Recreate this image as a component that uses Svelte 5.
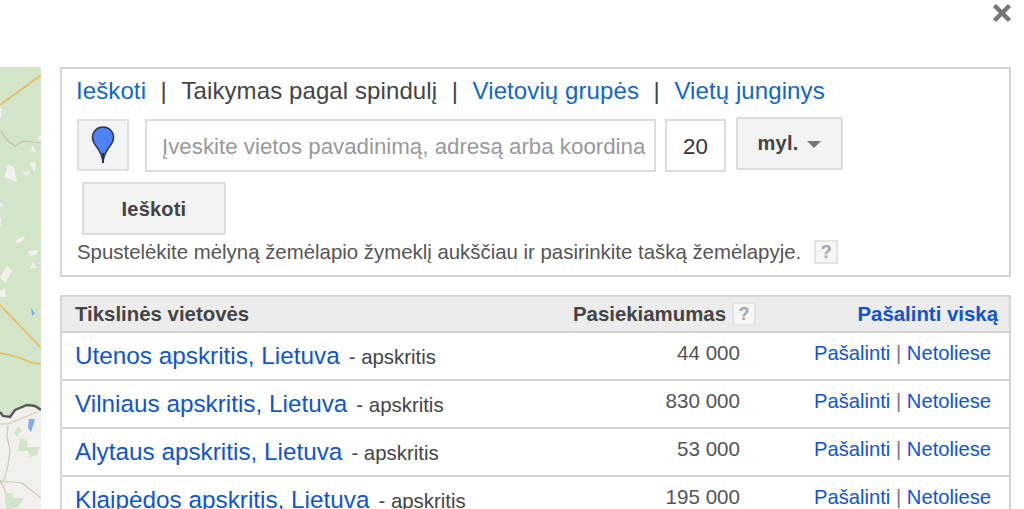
<script>
	const rows = [
		{ name: 'Utenos apskritis, Lietuva', reach: '44 000' },
		{ name: 'Vilniaus apskritis, Lietuva', reach: '830 000' },
		{ name: 'Alytaus apskritis, Lietuva', reach: '53 000' },
		{ name: 'Klaipėdos apskritis, Lietuva', reach: '195 000' }
	];
</script>

<div class="page">
	<div class="topbar">
		<svg class="close" width="20" height="20" viewBox="0 0 20 20">
			<path d="M2.5 2.500 L17.500 17.500 M17.500 2.500 L2.500 17.500" stroke="#777" stroke-width="4.500" fill="none" />
		</svg>
	</div>

	<div class="content">
		<div class="map">
			<svg width="41" height="442" viewBox="0 0 41 442">
				<rect width="41" height="442" fill="#f2f0ed" />
				<path d="M0 0 H41 V343 C38 339 32 338 27 338 C20 339 17 341 15 343 L10 350 L3 349 L0 345 Z" fill="#d3e5c9" />
				<!-- roads -->
				<path d="M0 38 L41 8" stroke="#e9bb5a" stroke-width="1.600" fill="none" />
				<path d="M0 63 L7 73 L15 79 L23 74 L41 76" stroke="#c9bfae" stroke-width="1.200" fill="none" />
				<path d="M0 238 L41 281" stroke="#e9bb5a" stroke-width="1.600" fill="none" />
				<path d="M0 286 L17 290 L33 296 L41 297" stroke="#e9bb5a" stroke-width="1.600" fill="none" />
				<path d="M0 357 L7 357 L23 351 L37 345" stroke="#cfc8b8" stroke-width="1.200" fill="none" />
				<path d="M8 358 L7 370 L10 383 L8 398 L5 411 L0 416" stroke="#cfc8b8" stroke-width="1.200" fill="none" />
				<path d="M0 414 L22 416 L41 431 M0 413 L5 423 L7 441" stroke="#cfc8b8" stroke-width="1.200" fill="none" />
				<!-- border -->
				<path d="M0 345 L3 349 L10 350 L15 343 L27 338 L35 339 L41 343" stroke="#555" stroke-width="2.400" fill="none" />
				<!-- clearings -->
				<g fill="#f2f0ed">
					<path d="M8 98 L14 100 L17 115 L4 110 Z" />
					<path d="M22 106 L31 103 L28 109 Z" />
					<path d="M29 96 L36 95 L35 105 Z" />
					<path d="M33 78 L36 85 L31 84 Z" />
					<path d="M41 67 V73 H37 Z" />
					<path d="M0 41 H1.500 V51 H0 Z" />
					<path d="M0 135 L4 139 L0 140 Z" />
					<path d="M0 151 H1 V158 H0 Z" />
					<path d="M15 173 L25 169 L23 174 L17 176 Z" />
					<path d="M28 184 L38 183 L36 188 L30 189 Z" />
					<path d="M33 195 L37 201 L30 201 Z" />
					<path d="M7 199 L12 204 L5 216 L0 210 Z" />
					<path d="M5 221 L6 230 H0 V224 Z" />
				</g>
				<!-- water -->
				<g fill="#7fabf5">
					<path d="M31 241 L35 246 L32 249 Z" />
					<path d="M29 352 H35 L31 365 L28 361 Z" />
				</g>
				<!-- forest -->
				<g fill="#d3e5c9">
					<path d="M18 359 L22 363 L17 370 L14 366 Z" />
					<path d="M20 371 L27 373 L28 380 L40 380 L37 385 L38 388 L30 390 L28 384 L18 384 Z" />
					<path d="M5 426 H13 V431 H24 L18 440 L10 442 H7 L5 433 Z" />
				</g>
			</svg>
		</div>

		<div class="main">
			<section class="panel">
				<nav class="tabs">
					<a href="#a">Ieškoti</a>
					<span class="sep">|</span>
					<span class="current">Taikymas pagal spindulį</span>
					<span class="sep">|</span>
					<a href="#a">Vietovių grupės</a>
					<span class="sep">|</span>
					<a href="#a">Vietų junginys</a>
				</nav>

				<div class="search">
					<button class="pin" aria-label="Žymeklis">
						<svg width="24" height="38" viewBox="0 0 24 38">
							<path d="M12 37 C11.500 29 9 25 5 20 C2.500 17 1.500 14.500 1.500 11.500 C1.500 5.500 6 1 12 1 C18 1 22.500 5.500 22.500 11.500 C22.500 14.500 21.500 17 19 20 C15 25 12.500 29 12 37 Z" fill="#4f82f5" stroke="#2b3a55" stroke-width="1.500" />
							<path d="M12 27 V37" stroke="#26324a" stroke-width="2" />
						</svg>
					</button>
					<div class="field place">Įveskite vietos pavadinimą, adresą arba koordina</div>
					<div class="field radius">20</div>
					<button class="btn unit">myl. <span class="caret"></span></button>
				</div>

				<button class="btn submit">Ieškoti</button>

				<p class="hint">
					Spustelėkite mėlyną žemėlapio žymeklį aukščiau ir pasirinkite tašką žemėlapyje.
					<span class="help">?</span>
				</p>
			</section>

			<section class="table">
				<div class="row head">
					<span>Tikslinės vietovės</span>
					<span class="reach-head">Pasiekiamumas <span class="help">?</span></span>
					<a href="#a" class="remove-all">Pašalinti viską</a>
				</div>
				{#each rows as row}
					<div class="row">
						<span class="place-name"><a href="#a">{row.name}</a><span class="kind">- apskritis</span></span>
						<span class="reach">{row.reach}</span>
						<span class="actions"><a href="#a">Pašalinti</a> <span class="bar">|</span> <a href="#a">Netoliese</a></span>
					</div>
				{/each}
			</section>
		</div>
	</div>
</div>

<style>
	:global(body) {
		margin: 0;
		background: #fff;
	}

	.page {
		width: 1024px;
		height: 509px;
		overflow: hidden;
		font-family: 'Liberation Sans', Arial, sans-serif;
		color: #444;
	}

	a {
		text-decoration: none;
	}

	.topbar {
		height: 67px;
		display: flex;
		justify-content: flex-end;
		padding: 3px 12px 0 0;
		box-sizing: border-box;
	}

	.content {
		display: flex;
		gap: 19px;
	}

	.map {
		width: 41px;
		height: 442px;
		flex-shrink: 0;
	}

	.map svg {
		display: block;
	}

	.main {
		width: 951px;
		flex-shrink: 0;
		display: flex;
		flex-direction: column;
		gap: 18px;
	}

	.panel {
		height: 210px;
		box-sizing: border-box;
		border: 2px solid #d4d4d4;
		padding: 7px 15px 0;
	}

	.tabs {
		display: flex;
		gap: 14.500px;
		margin-left: -1px;
		font-size: 24px;
		letter-spacing: 0.1px;
		line-height: 30px;
		height: 30px;
		white-space: nowrap;
	}

	.tabs a {
		color: #1167c9;
	}

	.sep,
	.current {
		color: #444;
	}

	.search {
		display: flex;
		align-items: flex-start;
		margin-top: 11px;
	}

	.pin {
		width: 52px;
		height: 52px;
		padding: 0;
		margin-top: 2px;
		box-sizing: border-box;
		border: 2px solid #e0e0e0;
		background: #f4f4f4;
		display: flex;
		align-items: center;
		justify-content: center;
		margin-right: 16px;
	}

	.field {
		box-sizing: border-box;
		height: 53px;
		margin-top: 2px;
		border: 2px solid #dcdcdc;
		font-size: 22.300px;
		line-height: 52px;
		white-space: nowrap;
		overflow: hidden;
	}

	.place {
		width: 511px;
		padding-left: 15px;
		color: #999;
		margin-right: 9px;
	}

	.radius {
		width: 61px;
		text-align: center;
		color: #333;
		margin-right: 10px;
	}

	.btn {
		box-sizing: border-box;
		border: 2px solid #dcdcdc;
		border-radius: 2px;
		background: #f3f3f3;
		color: #444;
		font: bold 20px 'Liberation Sans', Arial, sans-serif;
		letter-spacing: 0.2px;
		padding: 0;
	}

	.unit {
		width: 107px;
		height: 53px;
		display: flex;
		align-items: center;
		justify-content: center;
		gap: 9px;
	}

	.caret {
		width: 0;
		height: 0;
		border-left: 7px solid transparent;
		border-right: 7px solid transparent;
		border-top: 7px solid #777;
		margin-top: 1px;
	}

	.submit {
		display: block;
		width: 144px;
		height: 53px;
		margin: 10px 0 0 5px;
		padding-top: 2px;
	}

	.hint {
		margin: 4px 0 0;
		font-size: 20.400px;
		line-height: 26px;
		color: #555;
		white-space: nowrap;
		display: flex;
		align-items: center;
		gap: 13px;
	}

	.help {
		display: inline-block;
		box-sizing: border-box;
		width: 24px;
		height: 24px;
		border: 2px solid #e4e4e4;
		background: #f6f6f6;
		color: #a5a5a5;
		font-size: 18px;
		font-weight: bold;
		line-height: 20px;
		text-align: center;
	}

	.table {
		border: 2px solid #d4d4d4;
		border-bottom: 0;
	}

	.row {
		display: grid;
		grid-template-columns: 520px 145px 1fr;
		align-items: center;
		height: 48px;
		box-sizing: border-box;
		padding: 0 13px;
		border-bottom: 2px solid #d4d4d4;
		white-space: nowrap;
	}

	.head {
		height: 36px;
		background: #ececec;
		font-weight: bold;
		font-size: 20.400px;
		color: #444;
		padding-right: 11px;
	}

	.reach-head {
		display: flex;
		align-items: center;
		justify-content: flex-end;
		gap: 6px;
		margin-right: -16px;
		margin-left: -40px;
	}

	.remove-all {
		color: #1155cc;
		text-align: right;
	}

	.place-name {
		font-size: 24.300px;
	}

	.place-name a {
		color: #1155cc;
	}

	.kind {
		font-size: 20.400px;
		color: #444;
		margin-left: 9px;
	}

	.reach {
		text-align: right;
		font-size: 20.600px;
		color: #555;
		padding-bottom: 6px;
	}

	.actions {
		text-align: right;
		font-size: 20.200px;
		padding: 0 5px 6px 0;
	}

	.actions a {
		color: #1155cc;
	}

	.bar {
		color: #777;
	}
</style>
